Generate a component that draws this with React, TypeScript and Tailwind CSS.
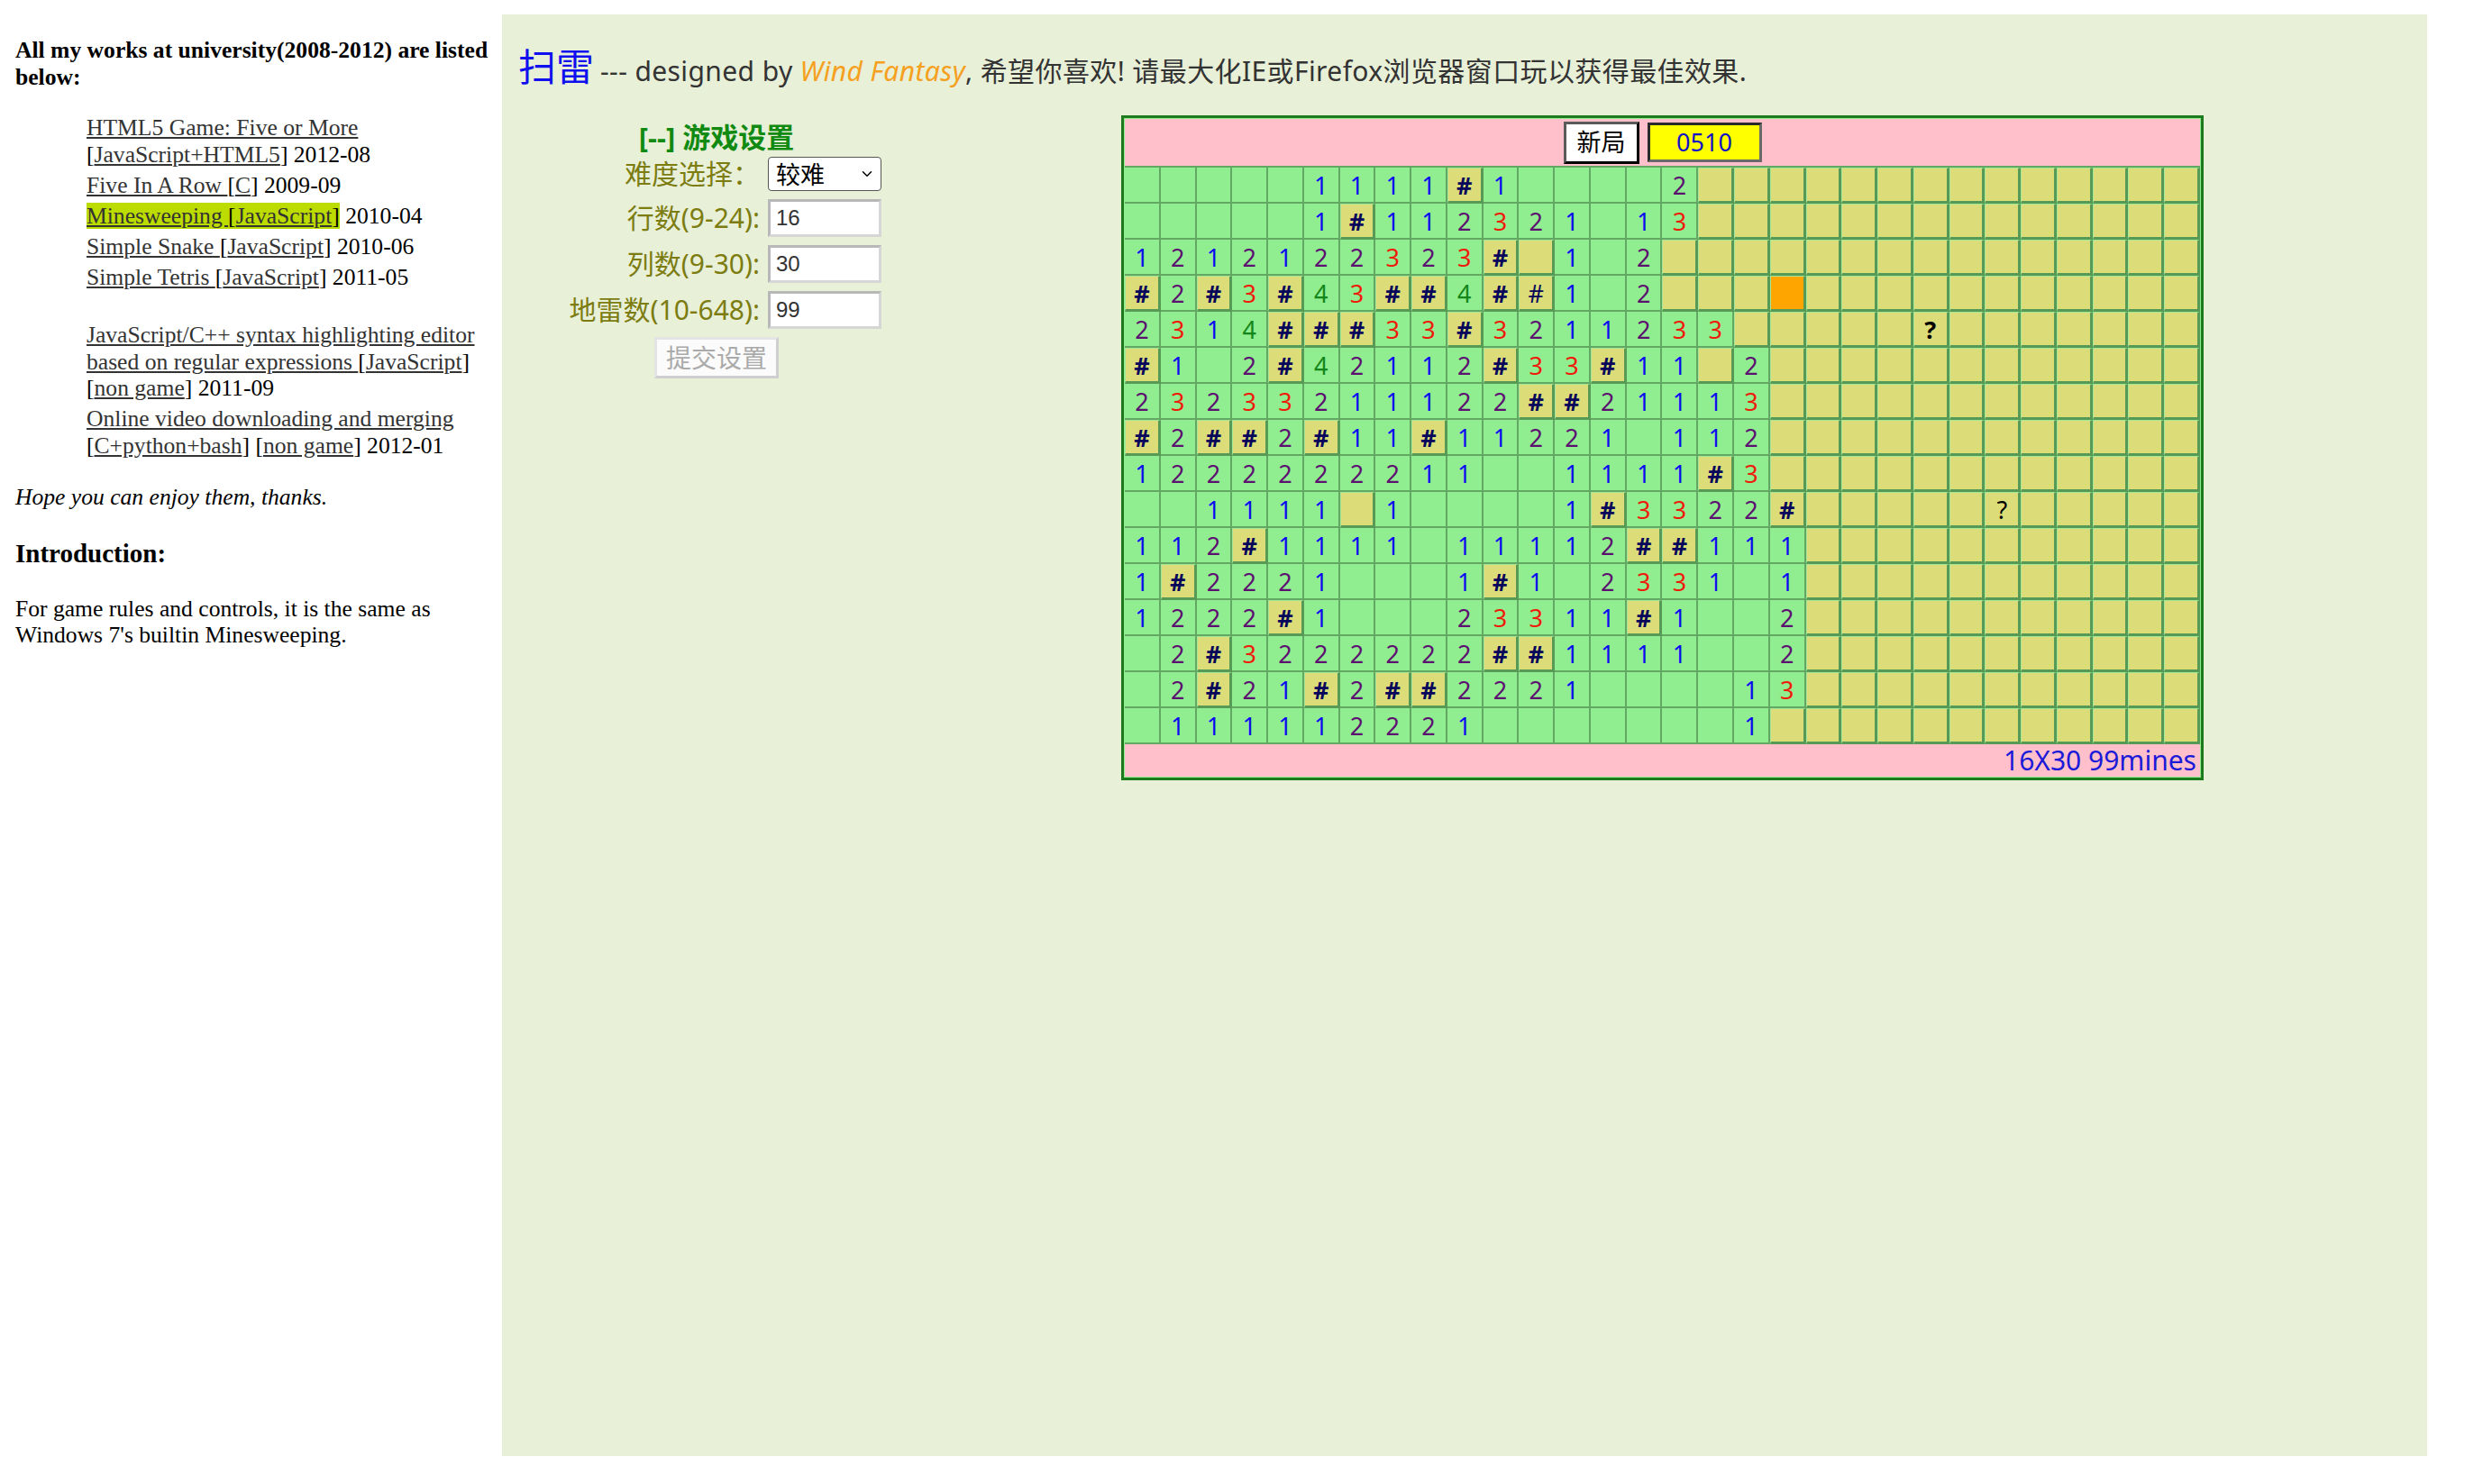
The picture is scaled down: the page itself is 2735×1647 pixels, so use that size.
import { ChevronDown } from 'lucide-react';

// board state, one string per row, 30 columns
// . open blank, _ covered, # marked (bold), h marked (thin), o last hit, Q / q question marks
const board = [
  '.....1111#1....2______________',
  '.....1#112321.13______________',
  '1212122323#_1.2_______________',
  '#2#3#43##4#h1.2___o___________',
  '2314###33#3211233_____Q_______',
  '#1.2#42112#33#11_2____________',
  '23233211122##21113____________',
  '#2##2#11#11221.112____________',
  '1222222211..1111#3____________',
  '..1111_1....1#3322#_____q_____',
  '112#1111.11112##111___________',
  '1#2221...1#1.2331.1___________',
  '1222#1...23311#1..2___________',
  '.2#3222222##1111..2___________',
  '.2#21#2##2221....13___________',
  '.111112221.......1____________',
];

const digitColor: Record<string, string> = {
  '1': 'text-[#0b0bee]',
  '2': 'text-[#5c1070]',
  '3': 'text-[#ee1a0a]',
  '4': 'text-[#13861a]',
};

function Cell({ ch }: { ch: string }) {
  const covered = ch === '_' || ch === '#' || ch === 'h' || ch === 'Q' || ch === 'q' || ch === 'o';
  const base = covered
    ? 'border-t border-l border-t-[#a4e89a] border-l-[#a4e89a] border-r-[3px] border-b-[3px] border-r-[#569a56] border-b-[#569a56]'
    : 'border-r-2 border-b-2 border-r-[#62a862] border-b-[#62a862]';
  const bg = ch === 'o' ? 'bg-[#ffa500]' : covered ? 'bg-[#dcdc78]' : 'bg-[#90ee90]';
  let content: React.ReactNode = null;
  if (ch === '#') content = <span className="font-bold text-[#06065a]">#</span>;
  else if (ch === 'h') content = <span className="text-[#06065a]">#</span>;
  else if (ch === 'Q') content = <span className="font-bold text-black">?</span>;
  else if (ch === 'q') content = <span className="text-black">?</span>;
  else if (digitColor[ch]) content = <span className={digitColor[ch]}>{ch}</span>;
  return (
    <div className={`flex h-[40px] items-center justify-center text-[27px] leading-none ${bg} ${base}`}>
      {content}
    </div>
  );
}

function Sidebar() {
  const link = 'text-[#333] underline';
  return (
    <aside className="w-[557px] shrink-0 pl-[17px] pr-[10px] pt-[41px] font-['Liberation_Serif',serif] text-[25.6px] leading-[29.5px] text-black">
      <p className="font-bold">All my works at university(2008-2012) are listed below:</p>
      <ul className="mt-[27px] pl-[79px]">
        <li className="mb-[4.5px]">
          <a className={link}>HTML5 Game: Five or More</a> [<a className={link}>JavaScript+HTML5</a>] 2012-08
        </li>
        <li className="mb-[4.5px]">
          <a className={link}>Five In A Row </a>[<a className={link}>C</a>] 2009-09
        </li>
        <li className="mb-[4.5px]">
          <span className="bg-[#bcdc00]">
            <a className={link}>Minesweeping </a>[<a className={link}>JavaScript</a>]
          </span>{' '}
          2010-04
        </li>
        <li className="mb-[4.5px]">
          <a className={link}>Simple Snake </a>[<a className={link}>JavaScript</a>] 2010-06
        </li>
        <li className="mb-[4.5px]">
          <a className={link}>Simple Tetris </a>[<a className={link}>JavaScript</a>] 2011-05
        </li>
        <li className="mb-[4.5px] h-[26px]" />
        <li className="mb-[4.5px]">
          <a className={link}>JavaScript/C++ syntax highlighting editor based on regular expressions </a>[
          <a className={link}>JavaScript</a>] [<a className={link}>non game</a>] 2011-09
        </li>
        <li>
          <a className={link}>Online video downloading and merging </a>[<a className={link}>C+python+bash</a>]{' '}
          [<a className={link}>non game</a>] 2012-01
        </li>
      </ul>
      <p className="mt-[28px] italic">Hope you can enjoy them, thanks.</p>
      <h2 className="mt-[31px] text-[29px] font-bold leading-[33px]">Introduction:</h2>
      <p className="mt-[30px]">For game rules and controls, it is the same as Windows 7's builtin Minesweeping.</p>
    </aside>
  );
}

function Settings() {
  const label = 'w-[242px] pr-[9px] text-right leading-none';
  const input =
    'h-[42px] w-[126px] border-[3px] border-t-[#b8b8b8] border-l-[#b8b8b8] border-r-[#d6d6d6] border-b-[#d6d6d6] bg-white px-[6px] font-["Liberation_Sans",sans-serif] text-[24px] leading-none text-[#333] outline-none';
  return (
    <div className="ml-[35px] w-[370px] pt-[6px] text-[30px] text-[#7c7c10]">
      <div className="text-center text-[31px] font-bold leading-[36px] text-[#118a11]">[--] 游戏设置</div>
      <div className="mt-[4px] flex h-[38px] items-center">
        <span className={label}>难度选择：</span>
        <div className="flex h-[38px] w-[126px] items-center justify-between rounded-[4px] border border-[#555] bg-white pl-[8px] pr-[6px] text-[27px] leading-none text-black">
          <span>较难</span>
          <ChevronDown className="h-[18px] w-[18px]" strokeWidth={2} />
        </div>
      </div>
      <div className="mt-[9px] flex h-[42px] items-center">
        <span className={label}>行数(9-24):</span>
        <input className={input} defaultValue="16" readOnly />
      </div>
      <div className="mt-[9px] flex h-[42px] items-center">
        <span className={label}>列数(9-30):</span>
        <input className={input} defaultValue="30" readOnly />
      </div>
      <div className="mt-[9px] flex h-[42px] items-center">
        <span className={label}>地雷数(10-648):</span>
        <input className={input} defaultValue="99" readOnly />
      </div>
      <div className="mt-[9px] flex justify-center">
        <button
          type="button"
          disabled
          className="h-[46px] w-[138px] border-[3px] border-t-[#e4e4e4] border-l-[#e4e4e4] border-r-[#cfcfcf] border-b-[#cfcfcf] bg-[#fbfbfb] text-[28px] leading-none text-[#aaa]"
        >
          提交设置
        </button>
      </div>
    </div>
  );
}

function Board() {
  return (
    <div className="ml-[264px] w-[1201px] border-[3px] border-[#1d7a1d] bg-[#90ee90] p-px">
      <div className="flex h-[52px] items-center justify-center gap-[9px] bg-[#ffc0cb]">
        <div className="flex h-[47px] w-[84px] items-center justify-center border-[3px] border-t-[#5a5a5a] border-l-[#5a5a5a] border-r-black border-b-black bg-white text-[27px] text-black">
          新局
        </div>
        <div className="flex h-[44px] w-[127px] items-center justify-center border-[3px] border-t-[#2a2a2a] border-l-[#2a2a2a] border-r-[#6a6a6a] border-b-[#6a6a6a] bg-[#ffff00] text-[27px] text-[#1010c8]">
          0510
        </div>
      </div>
      <div className="grid grid-cols-[repeat(30,minmax(0,1fr))] border-t-2 border-[#62a862] font-['Noto_Sans',sans-serif]">
        {board.map((row, r) => row.split('').map((ch, c) => <Cell key={`${r}-${c}`} ch={ch} />))}
      </div>
      <div className="flex h-[36px] items-center justify-end bg-[#ffc0cb] pr-[4px] text-[30px] leading-none text-[#1a1ad8]">
        16X30 99mines
      </div>
    </div>
  );
}

export default function App() {
  return (
    <div className="flex min-h-screen bg-white font-['Noto_Sans','Noto_Sans_CJK_SC',sans-serif]">
      <Sidebar />
      <main className="mb-[31px] mr-[42px] mt-[16px] h-[1600px] flex-1 bg-[#e8f0d8] pl-[18px] pt-[26px]">
        <div className="flex h-[60px] items-baseline text-[30px] tracking-[0.4px] text-[#333]">
          <span className="text-[42px] tracking-normal text-[#1010ee]">扫雷</span>
          <span className="ml-[7px]">--- designed by </span>
          <span className="ml-[8px] italic text-[#f5a01e]">Wind Fantasy</span>
          <span>, 希望你喜欢! 请最大化IE或Firefox浏览器窗口玩以获得最佳效果.</span>
        </div>
        <div className="mt-[26px] flex items-start">
          <Settings />
          <Board />
        </div>
      </main>
    </div>
  );
}
